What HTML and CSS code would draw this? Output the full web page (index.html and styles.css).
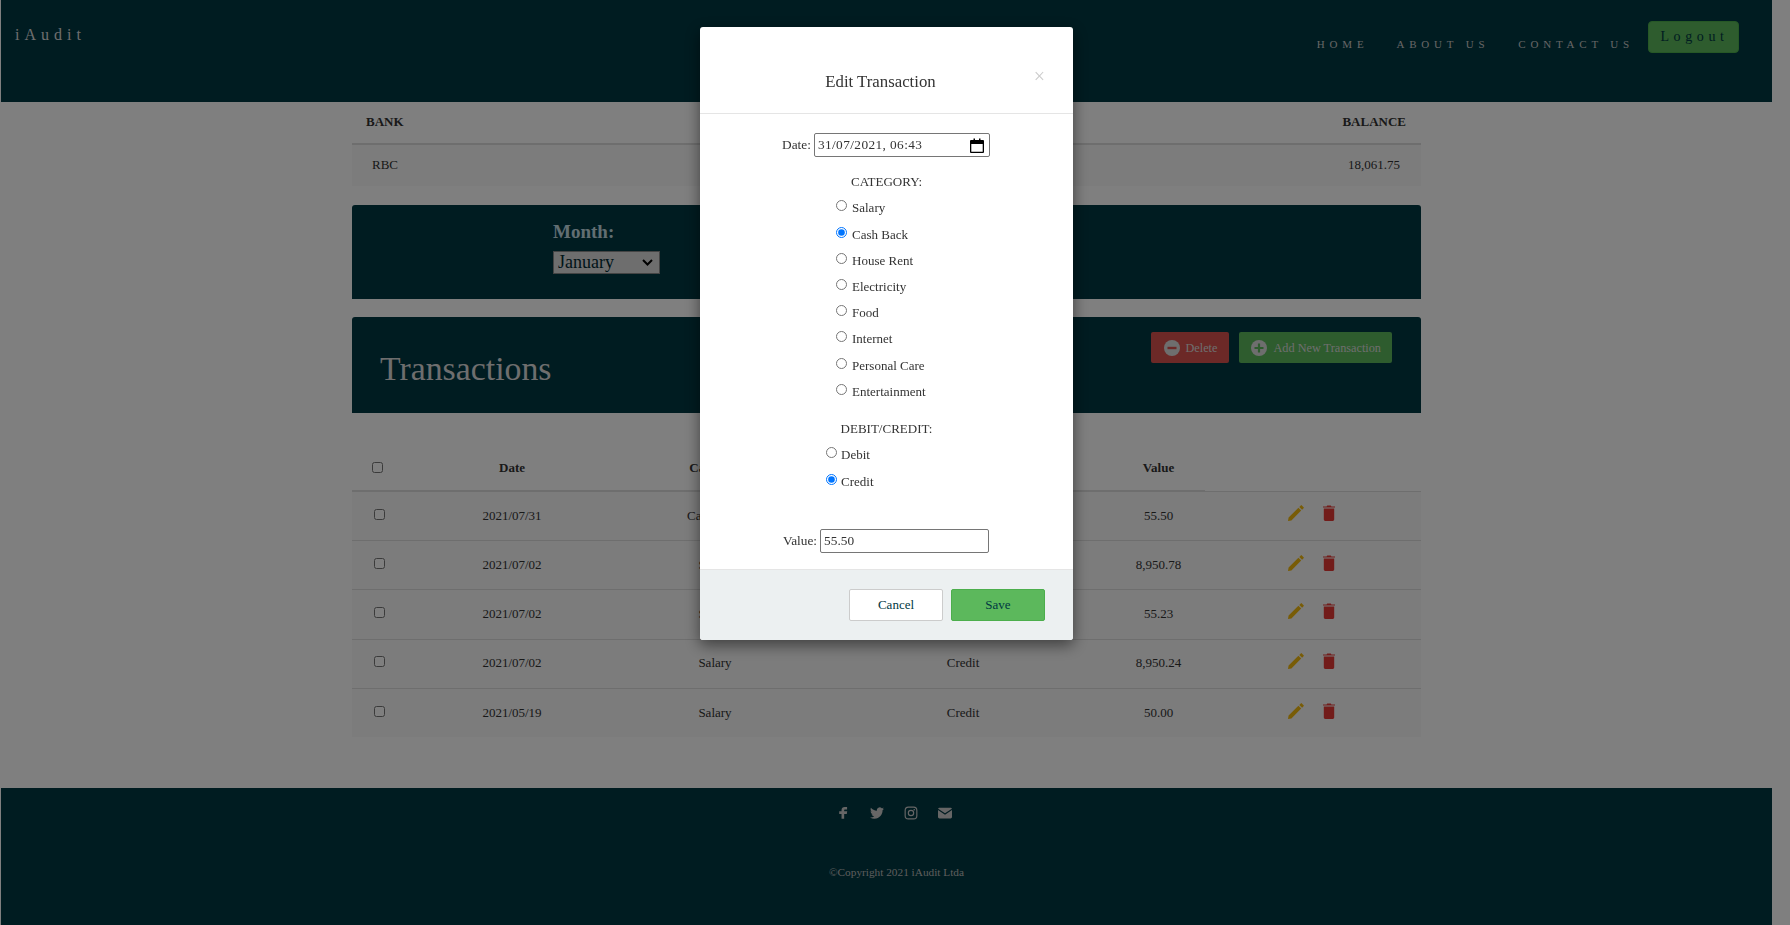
FILE: index.html
```html
<!DOCTYPE html>
<html lang="en">
<head>
  <meta charset="UTF-8">
  <meta name="viewport" content="width=device-width, initial-scale=1.0">
  <title>iAudit</title>
  <link rel="stylesheet" href="styles.css">
</head>
<body>
<div class="page">
  <header class="topbar">
    <a class="logo">iAudit</a>
    <nav class="nav">
      <a>Home</a>
      <a>About us</a>
      <a>Contact us</a>
      <button class="logout">Logout</button>
    </nav>
  </header>

  <main class="content">
    <table class="bank">
      <thead>
        <tr><th class="left">BANK</th><th class="right">BALANCE</th></tr>
      </thead>
      <tbody>
        <tr><td class="left">RBC</td><td class="right">18,061.75</td></tr>
      </tbody>
    </table>

    <section class="panel month">
      <label class="month-label" for="month">Month:</label>
      <select id="month" class="month-select">
        <option>January</option>
      </select>
    </section>

    <section class="panel transactions">
      <h1>Transactions</h1>
      <div class="actions">
        <button class="btn btn-delete">
          <svg class="btn-icon" viewBox="0 0 16 16"><circle cx="8" cy="8" r="8" fill="#ddd"/><rect x="3.5" y="6.8" width="9" height="2.4" fill="#d9534f"/></svg>
          Delete
        </button>
        <button class="btn btn-add">
          <svg class="btn-icon" viewBox="0 0 16 16"><circle cx="8" cy="8" r="8" fill="#ddd"/><path d="M3.5 6.9h3.4V3.5h2.2v3.4h3.4v2.2H9.1v3.4H6.9V9.1H3.5z" fill="#5cb85c"/></svg>
          Add New Transaction
        </button>
      </div>
    </section>

    <table class="list">
      <colgroup>
        <col class="c-check"><col class="c-date"><col class="c-cat"><col class="c-type"><col class="c-value"><col class="c-actions">
      </colgroup>
      <thead>
        <tr>
          <th class="check-head"><input type="checkbox"></th>
          <th>Date</th><th>Category</th><th>Type</th><th>Value</th>
          <th class="no-line"></th>
        </tr>
      </thead>
      <tbody>
        <tr>
          <td><input type="checkbox"></td><td>2021/07/31</td><td>Cash Back</td><td>Credit</td><td>55.50</td>
          <td class="row-actions">
            <svg class="pencil" viewBox="0 0 16 16"><path d="M0 16l.6-3.4L10.4 2.8l2.8 2.8-9.8 9.8zM11.3 1.9L13 .2q.3-.2.6 0l2.2 2.2q.2.3 0 .6l-1.7 1.7z"/></svg>
            <svg class="trash" viewBox="0 0 12 16"><path d="M0 1.6h3.6L4.2.4h3.6l.6 1.2H12v1H0zM.8 3.4h10.4v11.2q0 1.4-1.4 1.4H2.2q-1.4 0-1.4-1.4z"/></svg>
          </td>
        </tr>
        <tr>
          <td><input type="checkbox"></td><td>2021/07/02</td><td>Salary</td><td>Credit</td><td>8,950.78</td>
          <td class="row-actions">
            <svg class="pencil" viewBox="0 0 16 16"><path d="M0 16l.6-3.4L10.4 2.8l2.8 2.8-9.8 9.8zM11.3 1.9L13 .2q.3-.2.6 0l2.2 2.2q.2.3 0 .6l-1.7 1.7z"/></svg>
            <svg class="trash" viewBox="0 0 12 16"><path d="M0 1.6h3.6L4.2.4h3.6l.6 1.2H12v1H0zM.8 3.4h10.4v11.2q0 1.4-1.4 1.4H2.2q-1.4 0-1.4-1.4z"/></svg>
          </td>
        </tr>
        <tr>
          <td><input type="checkbox"></td><td>2021/07/02</td><td>Salary</td><td>Debit</td><td>55.23</td>
          <td class="row-actions">
            <svg class="pencil" viewBox="0 0 16 16"><path d="M0 16l.6-3.4L10.4 2.8l2.8 2.8-9.8 9.8zM11.3 1.9L13 .2q.3-.2.6 0l2.2 2.2q.2.3 0 .6l-1.7 1.7z"/></svg>
            <svg class="trash" viewBox="0 0 12 16"><path d="M0 1.6h3.6L4.2.4h3.6l.6 1.2H12v1H0zM.8 3.4h10.4v11.2q0 1.4-1.4 1.4H2.2q-1.4 0-1.4-1.4z"/></svg>
          </td>
        </tr>
        <tr>
          <td><input type="checkbox"></td><td>2021/07/02</td><td>Salary</td><td>Credit</td><td>8,950.24</td>
          <td class="row-actions">
            <svg class="pencil" viewBox="0 0 16 16"><path d="M0 16l.6-3.4L10.4 2.8l2.8 2.8-9.8 9.8zM11.3 1.9L13 .2q.3-.2.6 0l2.2 2.2q.2.3 0 .6l-1.7 1.7z"/></svg>
            <svg class="trash" viewBox="0 0 12 16"><path d="M0 1.6h3.6L4.2.4h3.6l.6 1.2H12v1H0zM.8 3.4h10.4v11.2q0 1.4-1.4 1.4H2.2q-1.4 0-1.4-1.4z"/></svg>
          </td>
        </tr>
        <tr>
          <td><input type="checkbox"></td><td>2021/05/19</td><td>Salary</td><td>Credit</td><td>50.00</td>
          <td class="row-actions">
            <svg class="pencil" viewBox="0 0 16 16"><path d="M0 16l.6-3.4L10.4 2.8l2.8 2.8-9.8 9.8zM11.3 1.9L13 .2q.3-.2.6 0l2.2 2.2q.2.3 0 .6l-1.7 1.7z"/></svg>
            <svg class="trash" viewBox="0 0 12 16"><path d="M0 1.6h3.6L4.2.4h3.6l.6 1.2H12v1H0zM.8 3.4h10.4v11.2q0 1.4-1.4 1.4H2.2q-1.4 0-1.4-1.4z"/></svg>
          </td>
        </tr>
      </tbody>
    </table>
  </main>

  <footer class="footer">
    <div class="social">
      <svg viewBox="0 2 24 24"><path d="M15 8h4V3.5h-4C11.5 3.5 9.5 5.5 9.5 9v2h-4v4.5h4V24H14v-8.5h4.5l.7-4.5H14V9c0-.7.4-1 1-1z"/></svg>
      <svg viewBox="0 0 24 24"><path d="M23.953 4.57a10 10 0 01-2.825.775 4.958 4.958 0 002.163-2.723c-.951.555-2.005.959-3.127 1.184a4.92 4.92 0 00-8.384 4.482C7.69 8.095 4.067 6.13 1.64 3.162a4.822 4.822 0 00-.666 2.475c0 1.71.87 3.213 2.188 4.096a4.904 4.904 0 01-2.228-.616v.06a4.923 4.923 0 003.946 4.827 4.996 4.996 0 01-2.212.085 4.936 4.936 0 004.604 3.417 9.867 9.867 0 01-6.102 2.105c-.39 0-.779-.023-1.17-.067a13.995 13.995 0 007.557 2.209c9.053 0 13.998-7.496 13.998-13.985 0-.21 0-.42-.015-.63A9.935 9.935 0 0024 4.59z"/></svg>
      <svg viewBox="0 0 24 24"><rect x="2" y="2" width="20" height="20" rx="5.5" fill="none" stroke="#ccc" stroke-width="2"/><circle cx="12" cy="12" r="4.6" fill="none" stroke="#ccc" stroke-width="2"/><circle cx="17.6" cy="6.4" r="1.4"/></svg>
      <svg viewBox="0 0 24 24"><path d="M2.5 3h19q2 0 2.3 1.6L12 12.4.2 4.6Q.5 3 2.5 3zM0 7l12 8 12-8v12q0 2.4-2.5 2.4h-19Q0 21.4 0 19z"/></svg>
    </div>
    <p class="copyright">©Copyright 2021 iAudit Ltda</p>
  </footer>
</div>

<div class="overlay"></div>

<div class="modal">
  <div class="modal-head">
    <h2>Edit Transaction</h2>
    <span class="close">×</span>
  </div>
  <form class="modal-body">
    <div class="field date-field">
      <label>Date:</label>
      <div class="date-box">
        <span>31/07/2021, 06:43</span>
        <svg viewBox="0 0 14 15"><path d="M1 2h2.5V.5H5V2h4V.5h1.5V2H13q1 0 1 1v11q0 1-1 1H1q-1 0-1-1V3q0-1 1-1zm.3 4v7.7h11.4V6z"/></svg>
      </div>
    </div>

    <p class="group-title cat-title">CATEGORY:</p>
    <div class="radios cat-radios">
      <label><input type="radio" name="cat">Salary</label>
      <label><input type="radio" name="cat" checked>Cash Back</label>
      <label><input type="radio" name="cat">House Rent</label>
      <label><input type="radio" name="cat">Electricity</label>
      <label><input type="radio" name="cat">Food</label>
      <label><input type="radio" name="cat">Internet</label>
      <label><input type="radio" name="cat">Personal Care</label>
      <label><input type="radio" name="cat">Entertainment</label>
    </div>

    <p class="group-title dc-title">DEBIT/CREDIT:</p>
    <div class="radios dc-radios">
      <label><input type="radio" name="dc">Debit</label>
      <label><input type="radio" name="dc" checked>Credit</label>
    </div>

    <div class="field value-field">
      <label>Value:</label>
      <input class="value-input" type="text" value="55.50">
    </div>
  </form>
  <div class="modal-foot">
    <button class="mbtn cancel">Cancel</button>
    <button class="mbtn save">Save</button>
  </div>
</div>
</body>
</html>
```

FILE: styles.css
```css
html,body {
  margin: 0;
  padding: 0;
  height: 925px;
  overflow: hidden;
  background: #fff;
  font-family: "Liberation Serif", serif;
  font-size: 13px;
  color: #333;
}
.page {
  width: 1771px;
  margin-left: 1px;
}

/* top bar */
.topbar {
  display: flex;
  justify-content: space-between;
  height: 102px;
  background: #003842;
}
.logo {
  margin: 26px 0 0 14px;
  font-size: 16px;
  letter-spacing: 5px;
  color: #ddd;
}
.nav {
  display: flex;
  align-items: flex-start;
  padding: 21px 33px 0 0;
}
.nav a {
  margin: 17px 28px 0 0;
  font-size: 11px;
  line-height: 13px;
  letter-spacing: 4.8px;
  text-transform: uppercase;
  color: #ccc;
}
.nav a:nth-child(2) {
  margin-right: 29px;
}
.nav a:nth-child(3) {
  margin-right: 14px;
}
.logout {
  width: 91px;
  height: 32px;
  padding: 0 0 0 2px;
  border: 1px solid #4cae4c;
  border-radius: 4px;
  background: #5cb85c;
  font: 14px "Liberation Serif", serif;
  letter-spacing: 4.6px;
  color: #003842;
}

/* main column */
.content {
  width: 1069px;
  height: 686px;
  margin-left: 351px;
}
table {
  width: 100%;
  border-collapse: collapse;
}
.bank th {
  height: 40px;
  padding: 0 15px 1px 14px;
  border-bottom: 2px solid #ddd;
  text-align: left;
}
.bank th.right {
  text-align: right;
}
.bank td {
  height: 39px;
  padding: 0 21px 2px 20px;
  background: #f9f9f9;
}
.bank td.right {
  text-align: right;
}
.panel {
  background: #003842;
  border-radius: 3px 3px 0 0;
}
.month {
  display: flex;
  flex-direction: column;
  align-items: flex-start;
  height: 94px;
  margin-top: 19px;
  padding-left: 201px;
  box-sizing: border-box;
}
.month-label {
  margin-top: 16px;
  font-size: 19px;
  line-height: 22px;
  font-weight: bold;
  color: #c4dde4;
}
.month-select {
  appearance: none;
  width: 107px;
  height: 23px;
  margin-top: 8px;
  padding: 0 0 1px 4px;
  border: 1px solid #888;
  border-radius: 0;
  background: #ddd url("data:image/svg+xml,%3Csvg xmlns='http://www.w3.org/2000/svg' viewBox='0 0 11 7'%3E%3Cpath d='M1 1l4.5 4.5L10 1' fill='none' stroke='%23000' stroke-width='2'/%3E%3C/svg%3E") no-repeat right 6px center / 11px 7px;
  color: #002a32;
  font: 18px "Liberation Serif", serif;
}
.transactions {
  display: flex;
  justify-content: space-between;
  height: 96px;
  margin-top: 18px;
  padding: 0 29px 0 28px;
}
.transactions h1 {
  margin: 32px 0 0;
  font-size: 33.8px;
  line-height: 40px;
  font-weight: normal;
  color: #ddd;
}
.actions {
  display: flex;
  gap: 10px;
  padding-top: 15px;
}
.btn {
  display: flex;
  align-items: center;
  gap: 6px;
  height: 31px;
  padding: 1px 11px 0 13px;
  border: 0;
  border-radius: 2px;
  font: 12.25px "Liberation Serif", serif;
  color: #ddd;
}
.btn-icon {
  width: 16px;
  height: 16px;
  margin-top: -1px;
}
.btn-delete {
  padding-right: 12px;
  background: #d9534f;
}
.btn-add {
  padding-left: 12px;
  background: #5cb85c;
}

/* transactions list */
.list {
  table-layout: fixed;
  margin-top: 17px;
}
.c-check { width: 54px; }
.c-date { width: 212px; }
.c-cat { width: 194px; }
.c-type { width: 302px; }
.c-value { width: 91px; }
.list th {
  height: 45px;
  padding: 15px 0 0;
  border-bottom: 2px solid #ddd;
}
.list th.check-head {
  padding-left: 20px;
  text-align: left;
}
.list th.no-line {
  border-bottom: 1px solid #ddd;
}
.list th:nth-child(5),
.list td:nth-child(5) {
  padding-right: 2px;
}
.list input {
  width: 11px;
  height: 11px;
  margin: 0 0 4px;
  vertical-align: middle;
}
.list th input {
  margin-bottom: 2px;
}
.list td {
  height: 48px;
  padding: 0;
  border-bottom: 1px solid #ddd;
  background: #f8f8f8;
  text-align: center;
}
.list tr:nth-child(3) td {
  height: 47px;
  padding-bottom: 2px;
}
.list tr:nth-child(4) td {
  height: 46px;
  padding-bottom: 2px;
}
.list tr:last-child td {
  border-bottom: 0;
}
.list .row-actions {
  padding-right: 3px;
  font-size: 0;
}
.pencil {
  width: 16px;
  height: 16px;
  margin: 0 19px 5px 0;
  fill: #f1b90f;
}
.trash {
  width: 12px;
  height: 16px;
  margin-bottom: 5px;
  fill: #e53935;
}

/* footer */
.footer {
  height: 137px;
  background: #003842;
  overflow: hidden;
}
.social {
  display: flex;
  justify-content: center;
  gap: 20px;
  margin: 18px 0 0 15px;
}
.social svg {
  width: 14px;
  height: 14px;
  fill: #ccc;
}
.copyright {
  margin: 46px 0 0 20px;
  font-size: 11.3px;
  line-height: 13px;
  text-align: center;
  color: #bbb;
}

/* modal */
.overlay {
  position: fixed;
  inset: 0;
  background: rgba(0,0,0,0.5);
}
.modal {
  position: fixed;
  top: 27px;
  left: 700px;
  display: flex;
  flex-direction: column;
  width: 373px;
  height: 613px;
  border-radius: 3px;
  background: #fff;
  box-shadow: 0 5px 15px rgba(0,0,0,0.5);
}
.modal-head {
  position: relative;
  height: 87px;
  border-bottom: 1px solid #e5e5e5;
  box-sizing: border-box;
}
.modal-head h2 {
  margin: 45px 12px 0 0;
  font-size: 16.8px;
  line-height: 19px;
  font-weight: normal;
  text-align: center;
}
.close {
  position: absolute;
  top: 39px;
  right: 28px;
  font-size: 20px;
  line-height: 20px;
  color: #ccc;
}
.modal-body {
  flex: 1;
  font-size: 13px;
}
.field {
  display: flex;
  align-items: center;
}
.field label {
  font-size: 13.333px;
}
.date-field {
  margin: 19px 0 0 82px;
}
.date-box {
  display: flex;
  align-items: center;
  justify-content: space-between;
  width: 176px;
  height: 24px;
  margin-left: 3px;
  padding: 0 5px 0 3px;
  box-sizing: border-box;
  border: 1px solid #767676;
  border-radius: 2px;
  font-size: 13.333px;
  letter-spacing: 0.4px;
}
.date-box svg {
  width: 14px;
  height: 15px;
  fill: #000;
}
.group-title {
  margin: 0;
  line-height: 15px;
  text-align: center;
}
.cat-title {
  margin-top: 17px;
}
.dc-title {
  margin-top: 12px;
}
.radios {
  display: flex;
  flex-direction: column;
}
.radios label {
  display: flex;
  align-items: flex-start;
  height: 26.2px;
  line-height: 17px;
}
.radios input {
  width: 11px;
  height: 11px;
  margin: 1px 4px 0 0;
  flex: none;
}
.cat-radios {
  margin: 10.4px 0 0 136px;
}
.cat-radios label {
  gap: 1px;
}
.dc-radios {
  margin: 10px 0 0 126px;
}
.dc-radios label {
  height: 27px;
}
.value-field {
  margin: 29px 0 0 83px;
}
.value-input {
  width: 169px;
  height: 24px;
  margin-left: 3px;
  padding: 0 3px;
  box-sizing: border-box;
  border: 1px solid #767676;
  border-radius: 2px;
  font: 13.333px "Liberation Serif", serif;
  color: #333;
}
.modal-foot {
  display: flex;
  justify-content: flex-end;
  gap: 8px;
  height: 71px;
  padding: 19px 28px 0 0;
  box-sizing: border-box;
  border-top: 1px solid #e5e5e5;
  border-radius: 0 0 3px 3px;
  background: #ecf0f1;
}
.mbtn {
  width: 94px;
  height: 32px;
  padding: 0;
  border: 1px solid #ccc;
  border-radius: 2px;
  font: 13px "Liberation Serif", serif;
  color: #003842;
}
.cancel {
  background: #fff;
}
.save {
  border-color: #4cae4c;
  background: #5cb85c;
}
```
